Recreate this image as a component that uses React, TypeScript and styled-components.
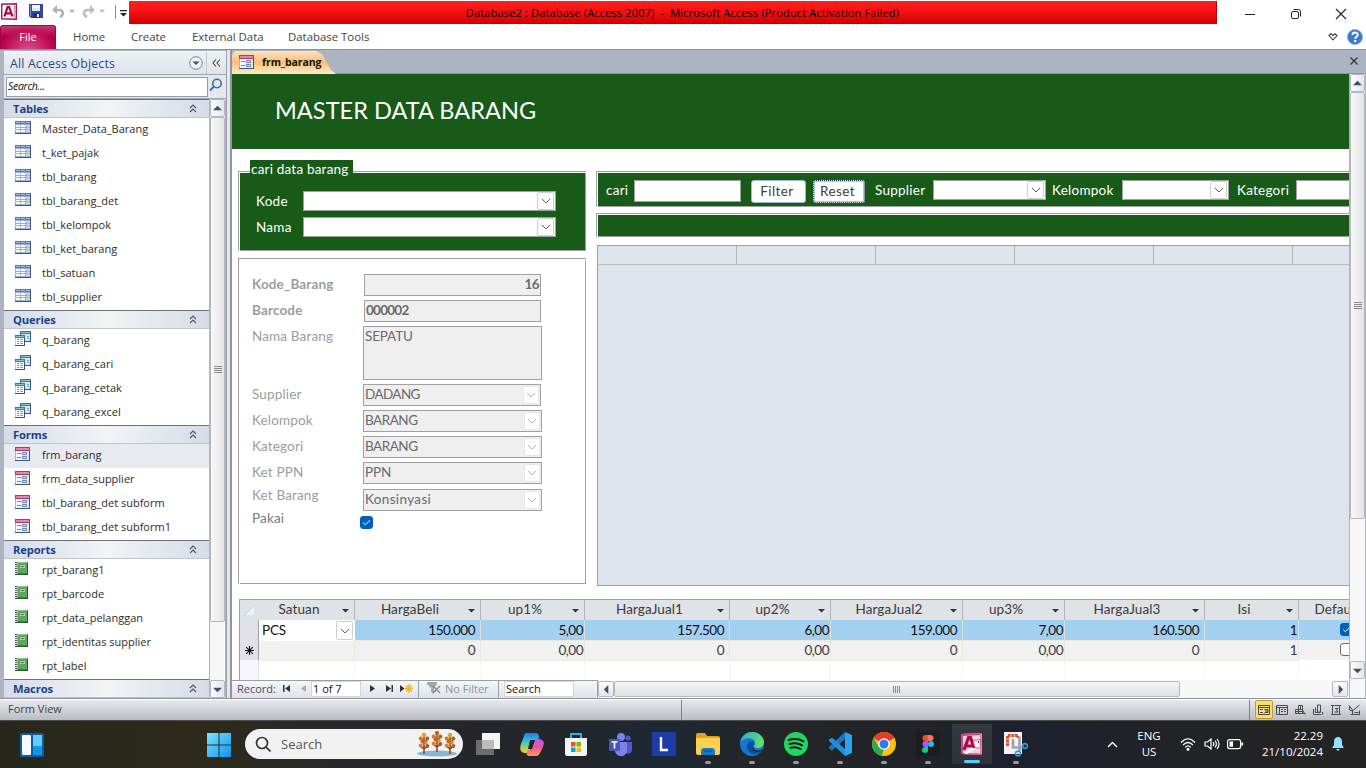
import React from "react";
import styled, { createGlobalStyle, css } from "styled-components";

const UI = `"Open Sans", "Noto Sans", sans-serif`;
const FORM = `Lato, "Open Sans", sans-serif`;
const GREEN = "#185a18";
const LINE = "#a0a0a0";

const Global = createGlobalStyle`
  * { box-sizing: border-box; }
  body { margin: 0; background: #fff; overflow: hidden; }
  svg { display: block; flex: none; }
`;

const Desktop = styled.div`
  width: 1366px;
  height: 768px;
  display: flex;
  flex-direction: column;
  overflow: hidden;
  font-family: ${UI};
  font-size: 11px;
  color: #222;
  white-space: nowrap;
`;

/* ---------- title bar and ribbon ---------- */

const TitleBar = styled.header`
  height: 25px;
  display: flex;
  background: #fff;
`;
const QuickAccess = styled.div`
  width: 129px;
  height: 24px;
  display: flex;
  align-items: center;
`;
const Caption = styled.div`
  width: 1088px;
  height: 23px;
  margin-top: 1px;
  background: linear-gradient(#ff2020, #f81414 40%, #d60000);
  border-right: 1px solid #b80000;
  border-bottom: 1px solid #c80000;
  color: #000;
  font-size: 11px;
  line-height: 23px;
  text-align: center;
  padding-left: 20px;
  letter-spacing: 0.16px;
`;
const WindowButtons = styled.div`
  flex: 1;
  display: flex;
  align-items: center;
  padding: 3px 0 0 27px;
  gap: 33.5px;
`;
const Ribbon = styled.nav`
  height: 25px;
  display: flex;
  background: #fff;
  border-bottom: 1px solid #8b9097;
`;
const FileTab = styled.div`
  width: 56px;
  height: 24px;
  border-radius: 3px 3px 0 0;
  border: 1px solid #a3043f;
  border-bottom: 0;
  background: radial-gradient(ellipse at 50% 115%, #e2528f 0, #c2115a 55%, transparent 75%),
    linear-gradient(#c63a73, #b10048 45%, #b8004f);
  color: #fff;
  line-height: 22px;
  text-align: center;
`;
const RibbonTab = styled.div<{ $w: number }>`
  width: ${(p) => p.$w}px;
  padding-left: 17px;
  line-height: 23px;
  font-size: 11.4px;
  color: #444;
`;
const RibbonTools = styled.div`
  margin-left: auto;
  display: flex;
  align-items: center;
  gap: 9px;
  padding-right: 3px;
`;

/* ---------- work area ---------- */

const Work = styled.div`
  height: 648px;
  display: flex;
  background: #acb4c1;
`;
const NavPane = styled.aside`
  width: 222px;
  margin: 1px 0 0 4px;
  height: 646px;
  background: #fff;
  display: flex;
  flex-direction: column;
`;
const NavHeader = styled.div`
  height: 24px;
  flex: none;
  display: flex;
  align-items: center;
  background: linear-gradient(#eef1f5, #dfe3ea);
  border-bottom: 1px solid #a0a8b4;
  color: #1e4a91;
  font-size: 12.3px;
  padding: 1px 0 0 6px;
`;
const NavTitle = styled.div`
  flex: 1;
  letter-spacing: 0.18px;
`;
const NavCollapse = styled.div`
  width: 20px;
  height: 22px;
  margin-left: 3px;
  border-left: 1px solid #c3c9d2;
  display: flex;
  align-items: center;
  justify-content: center;
`;
const SearchRow = styled.div`
  height: 24px;
  flex: none;
  background: #e4e8ee;
  border-bottom: 1px solid #a0a8b4;
  padding: 2px 2px 1px;
  display: flex;
  gap: 1px;
`;
const SearchBox = styled.div`
  width: 202px;
  height: 20px;
  border: 1px solid #9b9ba3;
  background: #fff;
  padding-left: 1px;
  font-style: italic;
  font-size: 10.5px;
  line-height: 17px;
  color: #111;
  letter-spacing: -0.3px;
`;
const NavScrollArea = styled.div`
  flex: 1;
  display: flex;
`;
const NavList = styled.div`
  width: 205px;
`;
const GroupHead = styled.div`
  height: 19px;
  display: flex;
  align-items: center;
  justify-content: space-between;
  border-top: 1px solid #6d7078;
  border-bottom: 1px solid #c0c4ca;
  background: linear-gradient(90deg, #d5dbe8, #f2f4f5 50%, #d5dbe8);
  color: #1a428a;
  font-weight: 700;
  font-size: 11.2px;
  letter-spacing: -0.1px;
  padding: 0 12px 0 9px;
  line-height: 17px;
`;
const NavItem = styled.div<{ $active?: boolean }>`
  height: 24px;
  display: flex;
  align-items: center;
  padding: 0 0 4px 11px;
  background: ${(p) => (p.$active ? "#e7eaef" : "#fff")};
  color: #2c2c2c;
  font-size: 11px;
`;
const ItemIcon = styled.span`
  width: 27px;
  padding-bottom: 1px;
`;
const Gutter = styled.div`
  width: 6px;
  border-left: 1px solid #9aa2ae;
  background: linear-gradient(90deg, #e4e8ee 0 3px, #8f959e 3px);
`;

/* ---------- scroll bars ---------- */

const VBar = styled.div`
  width: 17px;
  display: flex;
  flex-direction: column;
  background: #f7f7f7;
  border-left: 1px solid #b0b4ba;
  border-right: 1px solid #b0b4ba;
`;
const barPiece = css`
  border: 1px solid #b4b7bc;
  border-radius: 2px;
  display: flex;
  align-items: center;
  justify-content: center;
`;
const VButton = styled.div`
  height: 18px;
  flex: none;
  ${barPiece};
  background: linear-gradient(90deg, #fdfdfe, #e3e5ea);
`;
const VThumb = styled.div<{ $h: number }>`
  height: ${(p) => p.$h}px;
  ${barPiece};
  background: linear-gradient(90deg, #f8f8f8, #e4e4e4);
`;
const BarCorner = styled.div`
  height: 19px;
`;
const Spacer = styled.div`
  flex: 1;
`;
const HBar = styled.div`
  flex: 1;
  display: flex;
  padding: 1px 1px 1px 0;
  background: #f7f7f7;
`;
const HButton = styled.div`
  width: 16px;
  ${barPiece};
  background: linear-gradient(#fdfdfe, #e3e5ea);
`;
const HThumb = styled.div`
  width: 566px;
  ${barPiece};
  background: linear-gradient(#f5f5f5, #dfe0e1);
`;

/* ---------- document ---------- */

const Doc = styled.main`
  width: 1134px;
  display: flex;
  flex-direction: column;
`;
const TabStrip = styled.div`
  height: 24px;
  padding-top: 1px;
  display: flex;
  align-items: flex-start;
  border-bottom: 1px solid #9096a0;
  background: #acb4c1;
`;
const DocTab = styled.div`
  width: 104px;
  height: 23px;
  display: flex;
  align-items: center;
  padding: 0 0 1px 7px;
  gap: 8px;
  background: linear-gradient(#fde3bf, #fac075 48%, #fbd5a2 75%, #fdeccb);
  clip-path: polygon(0 4px, 3px 0, 84px 0, 90px 3px, 99px 19px, 104px 23px, 0 23px);
  color: #111;
  font-size: 10.5px;
  font-weight: 700;
  letter-spacing: -0.1px;
`;
const CloseTab = styled.div`
  margin: 6px 8px 0 auto;
`;
const DocBody = styled.div`
  flex: 1;
  display: flex;
`;
const FormWrap = styled.div`
  width: 1117px;
  display: flex;
  flex-direction: column;
`;
const FormView = styled.section`
  height: 606px;
  overflow: hidden;
  background: #fff;
  font-family: ${FORM};
  font-size: 13.5px;
`;
const FormHeader = styled.h1`
  margin: 0;
  height: 75px;
  padding-left: 43px;
  background: ${GREEN};
  color: #fff;
  font-weight: 400;
  font-size: 23.5px;
  letter-spacing: 0.05px;
  line-height: 73px;
`;
const Columns = styled.div`
  display: flex;
  height: 450px;
  padding: 22px 0 0 6px;
`;
const LeftCol = styled.div`
  width: 348px;
  margin-right: 10px;
`;
const RightCol = styled.div`
  flex: 1;
  overflow: hidden;
`;
const Etched = styled.div<{ $h: number; $gap?: number }>`
  height: ${(p) => p.$h}px;
  margin-bottom: ${(p) => p.$gap ?? 0}px;
  border-left: 1px solid ${LINE};
  border-top: 1px solid ${LINE};
  padding: 1px 0 0 1px;
`;
const Fill = styled.div<{ $green?: boolean; $open?: boolean }>`
  height: 100%;
  border-bottom: 1px solid ${LINE};
  border-right: ${(p) => (p.$open ? 0 : 1)}px solid ${LINE};
  background: ${(p) => (p.$green ? GREEN : "#fff")};
  position: relative;
`;
const Legend = styled.div`
  position: absolute;
  left: 10px;
  top: -13px;
  width: 103px;
  height: 19px;
  padding-left: 1px;
  background: ${GREEN};
  color: #fff;
  line-height: 19px;
  letter-spacing: 0.2px;
`;
const SearchFields = styled.div`
  padding: 18px 0 0 16px;
  display: flex;
  flex-direction: column;
  gap: 6px;
`;
const SearchField = styled.label`
  display: flex;
  height: 20px;
  line-height: 20px;
  color: #fff;
`;
const FieldName = styled.span`
  width: 47px;
  letter-spacing: 0.25px;
`;
const Combo = styled.div<{ $w: number; $dim?: boolean; $h?: number }>`
  width: ${(p) => p.$w}px;
  flex: none;
  height: ${(p) => p.$h ?? 20}px;
  display: flex;
  justify-content: space-between;
  border: 1px solid ${LINE};
  background: ${(p) => (p.$dim ? "#efefef" : "#fff")};
  color: #6a6a6a;
  padding-left: 1px;
  line-height: 19px;
`;
const ComboText = styled.span<{ $ls: number }>`
  letter-spacing: ${(p) => p.$ls}px;
`;
const ComboButton = styled.span<{ $dim?: boolean }>`
  width: ${(p) => (p.$dim ? 16 : 17)}px;
  margin: ${(p) => (p.$dim ? "1px" : "0 1px 0 0")};
  border: 1px solid ${(p) => (p.$dim ? "#e8e8e8" : "#cfcfcf")};
  border-radius: 2px;
  background: #fdfdfd;
  display: flex;
  align-items: center;
  justify-content: center;
  color: ${(p) => (p.$dim ? "#b5b5b5" : "#606060")};
`;
const FilterBar = styled.div`
  display: flex;
  align-items: flex-start;
  padding: 7px 0 0 8px;
  color: #fff;
`;
const BarLabel = styled.span<{ $w: number }>`
  width: ${(p) => p.$w}px;
  flex: none;
  line-height: 21px;
  letter-spacing: 0.25px;
`;
const TextBox = styled.div`
  width: 107px;
  height: 22px;
  flex: none;
  border: 1px solid ${LINE};
  background: #fff;
`;
const Button = styled.button<{ $focus?: boolean; $w: number }>`
  width: ${(p) => p.$w}px;
  height: 23px;
  padding: 0 3px 1px 0;
  flex: none;
  font: inherit;
  letter-spacing: 0.4px;
  color: #404040;
  background: #fff;
  border-radius: 3px;
  border: ${(p) => (p.$focus ? "1px dotted #16305e" : "1px solid #9dbadb")};
  box-shadow: ${(p) => (p.$focus ? "inset 0 0 0 1px #a8c4ea" : "none")};
`;
const Sheet = styled.div`
  margin-left: 1px;
  height: 341px;
  border: 1px solid ${LINE};
  border-right: 0;
  background: #dde4ec;
`;
const SheetHead = styled.div`
  display: grid;
  grid-template-columns: repeat(6, 139px);
  height: 19px;
  border-bottom: 1px solid #b9bcc0;
`;
const SheetCell = styled.div`
  border-right: 1px solid #b0b5bb;
`;

const Details = styled.div`
  padding: 14px 0 0 12px;
`;
const DetailRow = styled.div<{ $h: number; $mt?: number; $bold?: boolean; $dark?: boolean }>`
  height: ${(p) => p.$h}px;
  margin-top: ${(p) => p.$mt ?? 4}px;
  display: flex;
  font-weight: ${(p) => (p.$bold ? 700 : 400)};
  color: ${(p) => (p.$dark ? "#7a7a7a" : "#9c9c9c")};
`;
const DetailLabel = styled.div<{ $lh?: number; $w?: number }>`
  width: ${(p) => p.$w ?? 111}px;
  flex: none;
  line-height: ${(p) => p.$lh ?? 21}px;
  letter-spacing: 0.15px;
`;
const Value = styled.div<{ $right?: boolean; $wide?: boolean; $ls?: number }>`
  width: ${(p) => (p.$wide ? 179 : 177)}px;
  border: 1px solid ${LINE};
  background: #efefef;
  color: #6a6a6a;
  line-height: 19px;
  padding: 0 1px;
  text-align: ${(p) => (p.$right ? "right" : "left")};
  letter-spacing: ${(p) => p.$ls ?? 0}px;
`;
const Check = styled.span<{ $on?: boolean; $mt?: number }>`
  width: 13px;
  height: 13px;
  margin-top: ${(p) => p.$mt ?? 0}px;
  flex: none;
  border-radius: 3px;
  display: flex;
  align-items: center;
  justify-content: center;
  background: ${(p) => (p.$on ? "#005fb8" : "#fff")};
  border: 1px solid ${(p) => (p.$on ? "#005fb8" : "#6a6a6a")};
`;

/* ---------- price datasheet ---------- */

const Prices = styled.div`
  margin-left: 7px;
  border-top: 1px solid ${LINE};
  border-left: 1px solid ${LINE};
  height: 81px;
`;
const PriceRow = styled.div<{ $kind: "head" | "cur" | "new" | "empty" }>`
  display: grid;
  grid-template-columns: 19px 96px 126px 104px 145px 101px 132px 102px 140px 94px 92px;
  height: 20px;
  line-height: ${(p) => (p.$kind === "head" ? 19 : 20)}px;
  background: ${(p) => ({ head: "#dfe2e7", cur: "#a3cff0", new: "#f1f1f1", empty: "#fff" })[p.$kind]};
  color: ${(p) => (p.$kind === "cur" ? "#111" : "#3a3a3a")};
`;
const Selector = styled.div<{ $empty?: boolean }>`
  background: ${(p) => (p.$empty ? "#f6f7fd" : "#dfe2e7")};
  border-right: 1px solid ${(p) => (p.$empty ? "#dddfe6" : "#9ca0a6")};
  border-bottom: 1px solid ${(p) => (p.$empty ? "transparent" : "#9ca0a6")};
  display: flex;
  align-items: center;
  justify-content: center;
`;
const Corner = styled.div`
  padding: 5px 0 0 4px;
`;
const HeadCell = styled.div`
  display: flex;
  justify-content: space-between;
  border-right: 1px solid #b2b5b9;
  padding-right: 5px;
  text-align: center;
  svg { margin-top: 7px; }
`;
const HeadText = styled.span`
  flex: 1;
  padding-right: 3px;
  letter-spacing: 0.1px;
`;
const NumCell = styled.div<{ $pad: number; $soft?: boolean; $faint?: boolean }>`
  border-right: 1px solid ${(p) => (p.$faint ? "#f5f5f0" : p.$soft ? "#e9e9dc" : "#d6dfd9")};
  border-bottom: 1px solid ${(p) => (p.$faint ? "transparent" : "#e9e9dc")};
  padding-right: ${(p) => p.$pad}px;
  text-align: right;
  letter-spacing: -0.5px;
`;
const UnitCell = styled.div`
  display: flex;
  justify-content: space-between;
  background: #fff;
  padding: 1px 1px 1px 3px;
  line-height: 19px;
  letter-spacing: -0.2px;
`;
const CheckCell = styled.div`
  padding: 3px 0 0 41px;
`;

/* ---------- record navigator ---------- */

const Bottom = styled.div`
  height: 18px;
  display: flex;
`;
const RecordBar = styled.div`
  width: 366px;
  border-top: 1px solid #9aa0aa;
  border-right: 1px solid #9aa0aa;
  background: linear-gradient(#f4f6f8, #dfe3e9);
  display: flex;
  align-items: flex-start;
  color: #444f60;
  font-size: 11px;
`;
const RecordPart = styled.div<{ $w: number; $sep?: boolean; $pl?: number; $gray?: boolean }>`
  width: ${(p) => p.$w}px;
  height: 17px;
  line-height: 15px;
  padding: 0 0 2px ${(p) => p.$pl ?? 0}px;
  flex: none;
  display: flex;
  align-items: center;
  gap: 4px;
  border-right: ${(p) => (p.$sep ? "1px solid #9aa0aa" : "0")};
  color: ${(p) => (p.$gray ? "#8e929a" : "inherit")};
`;
const RecordBox = styled.div<{ $w: number }>`
  width: ${(p) => p.$w}px;
  height: 16px;
  flex: none;
  background: #fff;
  border: 1px solid #d3d6db;
  color: #111;
  padding-left: 1px;
  line-height: 14px;
`;

/* ---------- status bar ---------- */

const Status = styled.footer`
  height: 22px;
  display: flex;
  align-items: center;
  border-top: 1px solid #8d939d;
  box-shadow: inset 0 1px #fff;
  background: linear-gradient(#e9ebee, #b9bdc3);
  color: #444;
`;
const StatusPart = styled.div<{ $w: number }>`
  width: ${(p) => p.$w}px;
  height: 20px;
  line-height: 17px;
  padding-left: 8px;
  border-right: 1px solid #7d828a;
`;
const ViewSlot = styled.div<{ $on?: boolean }>`
  width: 18px;
  height: 19px;
  display: flex;
  align-items: center;
  justify-content: center;
  border-radius: 2px;
  color: #4b4b4b;
  ${(p) => p.$on && css`background: #fddc73; border: 1px solid #c29a35;`}
`;
const Views = styled.div`
  display: flex;
  padding-left: 5px;
`;

/* ---------- taskbar ---------- */

const Taskbar = styled.div`
  height: 48px;
  display: flex;
  align-items: center;
  border-top: 1px solid #4c4c4c;
  background: linear-gradient(90deg, #27271d 0, #2d2a1b 15%, #27282a 24%, #22252a 42%, #1d2835 48%, #242527 56%, #212329 68%, #1d212f 75%, #222326 85%, #242424 100%);
  color: #fff;
`;
const Slot = styled.div<{ $w?: number; $active?: boolean }>`
  width: ${(p) => p.$w ?? 44}px;
  height: 47px;
  flex: none;
  display: flex;
  flex-direction: column;
  align-items: center;
  padding-top: 11px;
  ${(p) => p.$active && css`
    background: linear-gradient(#343840, #2e323b) center 3px / 40px 40px no-repeat;
  `}
`;
const Dot = styled.span<{ $active?: boolean }>`
  width: ${(p) => (p.$active ? 16 : 6)}px;
  height: 3px;
  margin-top: 4px;
  border-radius: 2px;
  background: ${(p) => (p.$active ? "#5ccbff" : "#9a9a9a")};
`;
const SearchPill = styled.div`
  width: 218px;
  height: 30px;
  margin: 0 3px 1px 4px;
  border-radius: 15px;
  background: #f2f2f2;
  display: flex;
  align-items: center;
  padding: 0 4px 0 10px;
  color: #555;
  font-size: 13px;
  gap: 10px;
  flex: none;
`;
const Grow = styled.span`
  flex: 1;
`;
const Tray = styled.div`
  margin-left: auto;
  padding: 0 19px 1px 0;
  display: flex;
  align-items: center;
`;
const TrayText = styled.div<{ $w: number; $right?: boolean }>`
  width: ${(p) => p.$w}px;
  font-size: 11.5px;
  line-height: 16px;
  text-align: ${(p) => (p.$right ? "right" : "center")};
`;

/* ---------- icons ---------- */

const Chevron = () => (
  <svg width="10" height="6" viewBox="0 0 10 6" fill="none" stroke="currentColor" strokeWidth="1">
    <path d="M1 1l4 4 4-4" />
  </svg>
);
const Tick = () => (
  <svg width="9" height="7" viewBox="0 0 9 7" fill="none" stroke="#fff" strokeWidth="1">
    <path d="M1.200 3.600l2.200 2.100L8 1.200" />
  </svg>
);
const Tri = ({ dir, color = "#3e4d78", size = 9 }: { dir: "up" | "down" | "left" | "right"; color?: string; size?: number }) => {
  const d = { up: "M0 7l5-5 5 5z", down: "M0 3l5 5 5-5z", left: "M7 0L2 5l5 5z", right: "M3 0l5 5-5 5z" }[dir];
  return <svg width={size} height={size} viewBox="0 0 10 10"><path d={d} fill={color} /></svg>;
};
const DoubleUp = () => (
  <svg width="8" height="9" viewBox="0 0 8 9" fill="none" stroke="#555" strokeWidth="1.100">
    <path d="M1 4l3-3 3 3M1 8l3-3 3 3" />
  </svg>
);
const TableIcon = () => (
  <svg width="16" height="13" viewBox="0 0 16 13">
    <path fill="#3f5680" d="M0 0h16v13H0z" />
    <path fill="#9db0d4" d="M0 0h15v12H0z" />
    <path fill="#5a78b4" d="M0 0h15v3H0z" />
    <path fill="#fff" d="M1 4h4v2H1zM6 4h4v2H6zM1 7h4v1H1zM6 7h4v1H6zM1 9h4v2H1zM6 9h4v2H6z" />
    <path fill="#c9d8f2" d="M11 4h4v2h-4zM11 7h4v1h-4zM11 9h4v2h-4z" />
    <path fill="#a9bce0" d="M1 1h4v1H1zM6 1h4v1H6zM11 1h4v1h-4z" />
  </svg>
);
const QueryIcon = () => (
  <svg width="16" height="15" viewBox="0 0 16 15">
    <path fill="#31547b" d="M5 0h11v11H5z" /><path fill="#d6e4f5" d="M6 3h9v7H6z" /><path fill="#35817f" d="M5 0h11v3H5z" /><path fill="#8cc5c0" d="M6 1h9v1H6z" />
    <path fill="#7f9cc5" d="M12 5h2v1h-2zM12 7h2v1h-2z" />
    <path fill="#31547b" d="M0 4h10v11H0z" /><path fill="#fff" d="M0 7h9v7H0z" /><path fill="#b8cbe8" d="M0 7h1v7H0z" /><path fill="#35817f" d="M0 4h10v3H0z" /><path fill="#8cc5c0" d="M1 5h8v1H1z" />
    <path fill="#7f9cc5" d="M2 8h2v1H2zM5 8h3v1H5zM2 10h2v1H2zM5 10h3v1H5zM2 12h2v1H2zM5 12h3v1H5z" />
  </svg>
);
const FormIcon = () => (
  <svg width="15" height="14" viewBox="0 0 15 14">
    <path fill="#3f567c" d="M0 0h15v14H0z" /><path fill="#dbe6f8" d="M0 4h14v9H0z" /><path fill="#a93a66" d="M0 0h15v4H0z" /><path fill="#e08aab" d="M1 1h13v2H1z" />
    <path fill="#f8fbff" d="M1 4h5v9H1z" /><path fill="#9db3d6" d="M0 4h1v9H0z" />
    <path fill="#6d85b0" d="M2 6h4v1H2zM2 10h4v1H2z" />
    <path fill="none" stroke="#6d85b0" d="M7.500 5.500h4v2h-4zM7.500 9.500h4v2h-4z" />
  </svg>
);
const ReportIcon = () => (
  <svg width="13" height="13" viewBox="0 0 13 13">
    <path fill="#2b5c2f" d="M2 0h11v13H2z" /><path fill="#5fa562" d="M2 0h10v12H2z" /><path fill="#8fc98c" d="M2 0h10v1H2zM2 1h1v10H2z" />
    <path fill="#a3cf9f" d="M5 3h5v3H5z" /><path fill="#4c8c4e" d="M6 4h3v1H6z" /><path fill="#3f7f43" d="M3 11h9v1H3z" />
    <path stroke="#444" strokeWidth="2" strokeDasharray="1 1" d="M1 0v13" />
  </svg>
);
const AccessLogo = () => (
  <svg width="16" height="17" viewBox="0 0 16 17">
    <path fill="#fff" stroke="#a91550" strokeWidth="1.400" d="M.7 1.200L15.300.7v15.600L.7 15.800z" />
    <path fill="none" stroke="#a5083f" strokeWidth="2.200" d="M3.400 13.500L6.600 4h1.600l3.200 9.500M4.800 10.400h5.400" />
    <path fill="#d9a0b8" d="M12.500 2h1.500v13h-1.500z" />
  </svg>
);
const AccessTask = () => (
  <svg width="24" height="24" viewBox="0 0 24 24">
    <path fill="#f7d3e2" d="M1 2l21-1v22L1 22z" /><path fill="#d8447f" d="M1 2l21-1v2L3 4v17l19 .5V23L1 22z" /><path fill="#e783ab" d="M20 2h2v20h-2z" />
    <path fill="none" stroke="#ad0a4b" strokeWidth="3.200" d="M4 18L8.500 5.500h2L14 16M6 14h7" />
    <path fill="#fff" stroke="#c43b74" strokeWidth=".8" d="M13 8.500l7.500-1v5.500c0 4-5 4-6 1z" /><path d="M4 21.500l8-6 3 1.500-8 5z" fill="#fff" />
    <circle cx="18.500" cy="10" r="1" fill="#b30d50" />
  </svg>
);
const Save = () => (
  <svg width="15" height="14" viewBox="0 0 15 14">
    <path fill="#3347a8" d="M0 0h14v14H2l-2-2z" /><path fill="#dfe7fa" d="M3 1h8v6H3z" /><path fill="#f8faff" d="M3 1h8v3H3z" /><path fill="#2a3354" d="M4 9h7v5H4z" /><path fill="#e9eefc" d="M8 10h2v3H8z" />
    <path fill="#7b8fe0" d="M1 1h1v11H1z" />
  </svg>
);
const Undo = () => (
  <svg width="13" height="13" viewBox="0 0 13 13" fill="none" stroke="#b3b3b3" strokeWidth="2.600">
    <path d="M2 5h5.500c4.500 0 4 5.500.5 7" /><path fill="#b3b3b3" stroke="none" d="M0 5l5-5v9z" />
  </svg>
);
const Redo = () => (
  <svg width="13" height="13" viewBox="0 0 13 13" fill="none" stroke="#bdbdbd" strokeWidth="2.600">
    <path d="M11 5H5.500C1 5 1 10 5 12" /><path fill="#bdbdbd" stroke="none" d="M13 5L8 0v9z" />
  </svg>
);
const Funnel = () => (
  <svg width="14" height="13" viewBox="0 0 14 13">
    <path fill="#a4a7ad" d="M0 0h10v2L7 6v6L4 10V6L0 2z" /><path stroke="#8b8e94" strokeWidth="1.600" d="M6 4l7 7M13 4l-7 7" />
  </svg>
);
const Help = () => (
  <svg width="16" height="16" viewBox="0 0 16 16">
    <circle cx="8" cy="8" r="7.600" fill="#3f78cc" stroke="#8fb4e8" strokeWidth=".8" />
    <path d="M5.500 6c0-3.300 5.200-3.200 5.200-.2 0 2-2.500 1.800-2.500 4" fill="none" stroke="#fff" strokeWidth="1.900" /><circle cx="8.200" cy="12" r="1.200" fill="#fff" />
  </svg>
);
const Grip = () => (
  <svg width="8" height="8" viewBox="0 0 8 8"><path d="M0 .5h8M0 2.500h8M0 4.500h8M0 6.500h8" stroke="#8a8a8a" /></svg>
);

const VIEW_ICONS = [
  "M.5 1.500h11v9H.5zM.5 3.500h11M2 5.500h3M2 8.500h3M6.500 5.500h3.500v3H6.500M7 7h3",
  "M.5 1.500h11v9H.5zM.5 3.500h11M3.500 3v7M5 5.500h2M8 5.500h2M5 7.500h2M8 7.500h2",
  "M4.500 1.500h4v4h-4zM1.500 5.500h7v4h-7zM4.500 5v5M6.500 1v5M1 7.500h8M8.500 6l2.500 4.500M9 9.500h2.500",
  "M1.500 5v5.500h7.500M3.500 3.500v5h5M5.500 1v7h3v-7zM10.500 8v3",
  "M1 1.500h3M8 1.500h3M2.500 1v9M9.500 1v9M1 10.500h10M4.500 1.500h4M4.500 10.500h4M5 4.500h3l-1.500 1.500 1.500 2H4.500",
  "M1 1.500l4 5L11.500 1M4.500 6.500v4h7v-4M2.500 10.500h9M6.500 8.500h4M1.500 2v4l3 1",
];

const SearchLens = () => (
  <svg width="14" height="15" viewBox="0 0 14 15" fill="none" stroke="#3b6db0" strokeWidth="1.600">
    <circle cx="8" cy="6.500" r="4.200" /><path d="M5 9.500L1 13.500" strokeWidth="2" />
  </svg>
);

const Trees = () => (
  <svg width="44" height="26" viewBox="0 0 44 26">
    <ellipse cx="22" cy="22.500" rx="20" ry="3" fill="#86b6d0" />
    {[9, 22, 35].map((x, i) => (
      <g key={x} transform={`translate(${x} ${i === 1 ? 0 : 2})`}>
        <path d="M0 3v18M0 9L-3.500 5M0 10l3.500-4M0 16l-4-3M0 16l4-3" stroke="#84451c" strokeWidth="1.500" />
        <circle cy="2" r="2.200" fill={i === 1 ? "#c9621c" : "#d9a32a"} />
        <circle cx="-3.300" cy="5.500" r="2" fill="#d9781f" /><circle cx="3.300" cy="5.500" r="2" fill="#b95a1a" />
        <circle cx="-1.500" cy="8.500" r="2" fill="#c4681d" /><circle cx="2" cy="9.500" r="1.800" fill="#dd9127" />
        <circle cx="-3.300" cy="12.500" r="2" fill="#d98424" /><circle cx="3.300" cy="13" r="2" fill="#b5531a" />
      </g>
    ))}
  </svg>
);

const icons: Record<string, React.ReactNode> = {
  widgets: <><rect width="24" height="24" rx="1.500" x="0" y="1" fill="#0b5ca8" /><rect x="2" y="3" width="9" height="20" rx="1" fill="#f6f8fb" /><path fill="#62ccfb" d="M13 3h9v11h-9z" /><path fill="#1793e8" d="M13 14h9v9h-9z" /></>,
  start: <path fill="url(#win)" d="M0 1h11.500v11.500H0zM12.500 1H24v11.500H12.500zM0 13.500h11.500V25H0zM12.500 13.500H24V25H12.500z" />,
  tasks: <><path d="M0 8h18v15H0z" fill="#6d6d6d" /><path d="M6 1h18v16H6z" fill="#f4f4f4" /><path d="M6 8h12v9H6z" fill="#bcbcbc" /></>,
  copilot: <><path d="M6 1h10c2 0 3 2 3 4l-1 3h-4L9 21H6C1 21-1 18 1 12L4 4c.5-2 1-3 2-3z" fill="url(#cpA)" /><path d="M18 7c5 0 7 3 5 8l-3 6c-1 2-2 3-4 3H9c-2 0-3-2-2-4l1-2h3l4-11z" fill="url(#cpB)" /><path d="M10 8h5l-3 9H8z" fill="#22242a" /></>,
  store: <><path d="M7 6V2h10v4" fill="none" stroke="#2fb4ea" strokeWidth="2" /><path d="M1 6h22v16q0 2-2 2H3q-2 0-2-2z" fill="#f4f4f4" /><path fill="#f25022" d="M7 10h4.500v4.500H7z" /><path fill="#7fba00" d="M12.500 10H17v4.500h-4.500z" /><path fill="#00a4ef" d="M7 15.500h4.500V20H7z" /><path fill="#ffb900" d="M12.500 15.500H17V20h-4.500z" /></>,
  teams: <><circle cx="13" cy="5" r="4" fill="#7b83eb" /><circle cx="20" cy="6" r="2.600" fill="#5059c9" /><path d="M16 10h8v8c0 3-4 5-6 3z" fill="#5059c9" /><path d="M7 10h12v8c0 8-11 8-12 1z" fill="#7b83eb" /><path d="M1 7h11v12H1z" fill="#4b53bc" /><path d="M3.500 10h6M6.500 10v6.500" stroke="#fff" strokeWidth="1.600" /></>,
  l: <><path d="M0 0h24v24H0z" fill="#1d3ca8" /><path d="M9 5v13h7" fill="none" stroke="#fff" strokeWidth="2.400" /></>,
  folder: <><path d="M0 3q0-2 2-2h7l2 3h11q2 0 2 2v4H0z" fill="#e3a21a" /><path d="M0 6h24v15q0 2-2 2H2q-2 0-2-2z" fill="#ffd04c" /><path d="M5 23v-4q0-3 3-3h8q3 0 3 3v4z" fill="#1778cc" /><path d="M8 19h8" stroke="#0d5ba5" strokeWidth="1.500" /></>,
  edge: <><circle cx="12" cy="12" r="12" fill="#1b74cf" /><path d="M.3 10C2 3 7 0 12 0c7 0 12 5 12 10 0 4-3 6-6 6-3 0-4-1-4-2 1-1 1.500-2 1-4C14 6 6 4 .3 10z" fill="url(#edge)" /><path d="M9 10c-4 4-2 11 5 12 4 0 6-1 8-3-3 1.500-9 1-9-4 0-2 1-3 1-4-1-2-3-2-5-1z" fill="#0c4f9e" /><path d="M13 15c0 3 5 5 10 2l-1 2c-5 2-12 0-9-4z" fill="#22272c" /></>,
  spotify: <><circle cx="12" cy="12" r="12" fill="#1ed760" /><path d="M4.500 8c5-1.500 11-1 15 1.300M5.500 12c4.500-1.200 9-.8 12.500 1.300M6.500 15.800c3.500-1 7-.6 10.200 1.200" fill="none" stroke="#17181a" strokeWidth="2" strokeLinecap="round" /></>,
  vscode: <><path d="M17 0l7 3v18l-7 3z" fill="#2ba3ee" /><path d="M17 0v7L4 18.500l-3-2V15z" fill="#1478c3" /><path d="M17 24v-7L4 5.500l-3 2V9z" fill="#1e8fdc" /></>,
  chrome: <><circle cx="12" cy="12" r="12" fill="#fbc116" /><path d="M12 12L1.600 6A12 12 0 0 1 22.400 6z" fill="#e33b2e" /><path d="M1.600 6l5.200 9 5.200 2-2.500 6.700A12 12 0 0 1 1.600 6z" fill="#2da94f" /><circle cx="12" cy="12" r="5.800" fill="#fff" /><circle cx="12" cy="12" r="4.500" fill="#2f7be8" /></>,
  figma: <><path d="M0 0h24v24H0z" fill="#1d1d1f" /><path d="M12 3H9.500a3 3 0 0 0 0 6H12z" fill="#f24e1e" /><path d="M12 3h2.500a3 3 0 0 1 0 6H12z" fill="#ff7262" /><path d="M12 9H9.500a3 3 0 0 0 0 6H12z" fill="#a259ff" /><circle cx="15" cy="12" r="3" fill="#1abcfe" /><path d="M12 15H9.500a3 3 0 1 0 2.500 3z" fill="#0acf83" /></>,
  snip: <><path d="M0 0h18v22H0z" fill="#f4f4f4" /><path d="M3.500 14V3.500H14V6" fill="none" stroke="#d8532b" strokeWidth="3" strokeDasharray="2.800 .8" /><path d="M9 7v8.500h9M15.500 5v14" stroke="#9ea3a8" strokeWidth="2.600" fill="none" /><circle cx="21" cy="14" r="2.400" fill="none" stroke="#2a9be0" strokeWidth="1.600" /><circle cx="14" cy="21.500" r="2.400" fill="none" stroke="#2a9be0" strokeWidth="1.600" /></>,
};

const Gradients = () => (
  <svg width="24" height="0" viewBox="0 0 24 0">
    <defs>
      <linearGradient id="win" x1="0" y1="0" x2="1" y2="1"><stop offset="0" stopColor="#7be3ff" /><stop offset="1" stopColor="#0f93ee" /></linearGradient>
      <linearGradient id="cpA" x1="0" y1="0" x2="0" y2="1"><stop offset="0" stopColor="#1c7cf0" /><stop offset=".45" stopColor="#3ec8c8" /><stop offset=".8" stopColor="#b6d64a" /><stop offset="1" stopColor="#f7c231" /></linearGradient>
      <linearGradient id="cpB" x1="0" y1="0" x2="0" y2="1"><stop offset="0" stopColor="#b45cf0" /><stop offset=".5" stopColor="#f0569a" /><stop offset="1" stopColor="#ff9a4a" /></linearGradient>
      <linearGradient id="edge" x1="0" y1="0" x2="1" y2="0.300"><stop offset="0" stopColor="#28a8e8" /><stop offset="1" stopColor="#5ee06c" /></linearGradient>
    </defs>
  </svg>
);

const TaskIcon = ({ name, w, running }: { name: string; w?: number; running?: boolean }) => (
  <Slot $w={w}>
    <svg width="24" height="25" viewBox="0 0 24 25">{icons[name]}</svg>
    {running && <Dot />}
  </Slot>
);

/* ---------- data ---------- */

const groups: { title: string; icon: React.ReactNode; items: string[] }[] = [
  { title: "Tables", icon: <TableIcon />, items: ["Master_Data_Barang", "t_ket_pajak", "tbl_barang", "tbl_barang_det", "tbl_kelompok", "tbl_ket_barang", "tbl_satuan", "tbl_supplier"] },
  { title: "Queries", icon: <QueryIcon />, items: ["q_barang", "q_barang_cari", "q_barang_cetak", "q_barang_excel"] },
  { title: "Forms", icon: <FormIcon />, items: ["frm_barang", "frm_data_supplier", "tbl_barang_det subform", "tbl_barang_det subform1"] },
  { title: "Reports", icon: <ReportIcon />, items: ["rpt_barang1", "rpt_barcode", "rpt_data_pelanggan", "rpt_identitas supplier", "rpt_label"] },
  { title: "Macros", icon: null, items: [] },
];
const heads = ["Satuan", "HargaBeli", "up1%", "HargaJual1", "up2%", "HargaJual2", "up3%", "HargaJual3", "Isi"];
const current = ["150.000", "5,00", "157.500", "6,00", "159.000", "7,00", "160.500", "1"];
const fresh = ["0", "0,00", "0", "0,00", "0", "0,00", "0", "1"];
const padFor = (i: number) => (i === 7 || i % 2 === 1 ? 1 : 5);

const DropBox = ({ w, h, dim, ls = 0, children }: { w: number; h?: number; dim?: boolean; ls?: number; children?: React.ReactNode }) => (
  <Combo $w={w} $h={h} $dim={dim}>
    <ComboText $ls={ls}>{children}</ComboText>
    <ComboButton $dim={dim}><Chevron /></ComboButton>
  </Combo>
);

const Navigation = () => (
  <NavPane>
    <NavHeader>
      <NavTitle>All Access Objects</NavTitle>
      <svg width="14" height="14" viewBox="0 0 14 14"><circle cx="7" cy="7" r="6.300" fill="#eef0f3" stroke="#7f8690" /><path d="M3.500 5.500h7L7 9z" fill="#4a4f58" /></svg>
      <NavCollapse>
        <svg width="9" height="8" viewBox="0 0 9 8" fill="none" stroke="#444" strokeWidth="1.100"><path d="M4 .5L1 4l3 3.500M8 .5L5 4l3 3.500" /></svg>
      </NavCollapse>
    </NavHeader>
    <SearchRow>
      <SearchBox>Search...</SearchBox>
      <SearchLens />
    </SearchRow>
    <NavScrollArea>
      <NavList>
        {groups.map((g) => (
          <React.Fragment key={g.title}>
            <GroupHead>{g.title}<DoubleUp /></GroupHead>
            {g.items.map((it) => (
              <NavItem key={it} $active={it === "frm_barang"}><ItemIcon>{g.icon}</ItemIcon>{it}</NavItem>
            ))}
          </React.Fragment>
        ))}
      </NavList>
      <VBar>
        <VButton><Tri dir="up" /></VButton>
        <VThumb $h={505}><Grip /></VThumb>
        <Spacer />
        <VButton><Tri dir="down" /></VButton>
      </VBar>
    </NavScrollArea>
  </NavPane>
);

const details: [string, string, number][] = [["Supplier", "DADANG", -0.6], ["Kelompok", "BARANG", -0.5], ["Kategori", "BARANG", -0.5], ["Ket PPN", "PPN", -0.1]];

const Form = () => (
  <FormView>
    <FormHeader>MASTER DATA BARANG</FormHeader>
    <Columns>
      <LeftCol>
        <Etched $h={80} $gap={7}>
          <Fill $green>
            <Legend>cari data barang</Legend>
            <SearchFields>
              <SearchField><FieldName>Kode</FieldName><DropBox w={253} /></SearchField>
              <SearchField><FieldName>Nama</FieldName><DropBox w={253} /></SearchField>
            </SearchFields>
          </Fill>
        </Etched>
        <Etched $h={326}>
          <Fill>
            <Details>
              <DetailRow $h={22} $mt={0} $bold><DetailLabel $w={112}>Kode_Barang</DetailLabel><Value $right $ls={-0.6}>16</Value></DetailRow>
              <DetailRow $h={22} $bold><DetailLabel $w={112}>Barcode</DetailLabel><Value $ls={-0.75}>000002</Value></DetailRow>
              <DetailRow $h={54}><DetailLabel>Nama Barang</DetailLabel><Value $wide $ls={-0.15}>SEPATU</Value></DetailRow>
              {details.map(([k, v, ls], i) => (
                <DetailRow key={k} $h={22}><DetailLabel>{k}</DetailLabel><DropBox w={i ? 179 : 178} h={22} dim ls={ls}>{v}</DropBox></DetailRow>
              ))}
              <DetailRow $h={22} $mt={5}><DetailLabel $lh={13}>Ket Barang</DetailLabel><DropBox w={179} h={22} dim ls={0.35}>Konsinyasi</DropBox></DetailRow>
              <DetailRow $h={18} $mt={0} $dark><DetailLabel $w={108} $lh={14}>Pakai</DetailLabel><Check $on $mt={5}><Tick /></Check></DetailRow>
            </Details>
          </Fill>
        </Etched>
      </LeftCol>
      <RightCol>
        <Etched $h={36} $gap={6}>
          <Fill $green $open>
            <FilterBar>
              <BarLabel $w={28}>cari</BarLabel><TextBox />
              <BarLabel $w={10} /><Button $w={55}>Filter</Button>
              <BarLabel $w={7} /><Button $w={52} $focus>Reset</Button>
              <BarLabel $w={10} /><BarLabel $w={58}>Supplier</BarLabel><DropBox w={113} />
              <BarLabel $w={6} /><BarLabel $w={70}>Kelompok</BarLabel><DropBox w={107} />
              <BarLabel $w={8} /><BarLabel $w={59}>Kategori</BarLabel><DropBox w={113} />
            </FilterBar>
          </Fill>
        </Etched>
        <Etched $h={24} $gap={8}><Fill $green $open /></Etched>
        <Sheet><SheetHead>{[0, 1, 2, 3, 4, 5].map((i) => <SheetCell key={i} />)}</SheetHead></Sheet>
      </RightCol>
    </Columns>
    <Prices>
      <PriceRow $kind="head">
        <Corner><svg width="11" height="11" viewBox="0 0 11 11"><path d="M11 0v11H0z" fill="#eef3fa" stroke="#b8c6da" strokeWidth=".6" /></svg></Corner>
        {heads.map((h) => <HeadCell key={h}><HeadText>{h}</HeadText><Tri dir="down" color="#333" size={7} /></HeadCell>)}
        <HeadCell><HeadText>Default</HeadText><Tri dir="down" color="#333" size={7} /></HeadCell>
      </PriceRow>
      <PriceRow $kind="cur">
        <Selector />
        <UnitCell>PCS<ComboButton><Chevron /></ComboButton></UnitCell>
        {current.map((v, i) => <NumCell key={i} $pad={padFor(i)}>{v}</NumCell>)}
        <CheckCell><Check $on><Tick /></Check></CheckCell>
      </PriceRow>
      <PriceRow $kind="new">
        <Selector>
          <svg width="9" height="9" viewBox="0 0 9 9" stroke="#111" strokeWidth="1.100"><path d="M4.500 0v9M0 4.500h9M1.200 1.200l6.600 6.600M7.800 1.200L1.200 7.800" /></svg>
        </Selector>
        <NumCell $pad={0} $soft />
        {fresh.map((v, i) => <NumCell key={i} $pad={padFor(i)} $soft>{v}</NumCell>)}
        <CheckCell><Check /></CheckCell>
      </PriceRow>
      <PriceRow $kind="empty">
        <Selector $empty />
        {heads.map((h) => <NumCell key={h} $pad={0} $faint />)}
      </PriceRow>
    </Prices>
  </FormView>
);

const Records = () => (
  <RecordBar>
    <RecordPart $w={51} $pl={5}>Record:</RecordPart>
    <RecordPart $w={18}><svg width="7" height="7" viewBox="0 0 7 7"><path d="M0 0h1.500v7H0zM7 0v7L2 3.500z" fill="#333" /></svg></RecordPart>
    <RecordPart $w={10}><svg width="5" height="7" viewBox="0 0 5 7"><path d="M5 0v7L0 3.500z" fill="#aaa" /></svg></RecordPart>
    <RecordBox $w={50}>1 of 7</RecordBox>
    <RecordPart $w={25} $pl={9}><svg width="5" height="7" viewBox="0 0 5 7"><path d="M0 0v7l5-3.500z" fill="#333" /></svg></RecordPart>
    <RecordPart $w={14}><svg width="7" height="7" viewBox="0 0 7 7"><path d="M5.500 0H7v7H5.500zM0 0v7l5-3.500z" fill="#333" /></svg></RecordPart>
    <RecordPart $w={19} $sep><svg width="13" height="9" viewBox="0 0 13 9"><path d="M0 1v7l4.500-3.500z" fill="#333" /><path d="M9 0v9M5 4.500h8M6 1.500l6 6M12 1.500l-6 6" stroke="#e8bd2c" strokeWidth="1.400" /></svg></RecordPart>
    <RecordPart $w={80} $pl={8} $sep $gray><Funnel />No Filter</RecordPart>
    <RecordPart $w={5} />
    <RecordBox $w={70}>Search</RecordBox>
  </RecordBar>
);

export default function App() {
  return (
    <>
      <Global />
      <Desktop>
        <TitleBar>
          <QuickAccess>
            <RecordPart $w={21} $pl={1}><AccessLogo /></RecordPart>
            <RecordPart $w={30} $pl={8}><Save /></RecordPart>
            <RecordPart $w={31} $pl={1}><Undo /><Tri dir="down" color="#aaa" size={6} /></RecordPart>
            <RecordPart $w={33}><Redo /><Tri dir="down" color="#bbb" size={6} /></RecordPart>
            <svg width="12" height="14" viewBox="0 0 12 14"><path d="M.5 0v14" stroke="#888" /><path d="M5 5h7v1.200H5zM5 8h7l-3.500 3.500z" fill="#222" /></svg>
          </QuickAccess>
          <Caption>Database2 : Database (Access 2007)&nbsp; -&nbsp; Microsoft Access (Product Activation Failed)</Caption>
          <WindowButtons>
            <svg width="12" height="12" viewBox="0 0 12 12"><path d="M1 6.500h10" stroke="#222" /></svg>
            <svg width="12" height="12" viewBox="0 0 12 12" fill="none" stroke="#222"><rect x="1.500" y="3.500" width="7" height="7" rx="1.500" /><path d="M3.500 1.500H8.500q2 0 2 2v5" /></svg>
            <svg width="12" height="12" viewBox="0 0 12 12" stroke="#222" strokeWidth="1.100"><path d="M1 1l10 10M11 1L1 11" /></svg>
          </WindowButtons>
        </TitleBar>
        <Ribbon>
          <FileTab>File</FileTab>
          <RibbonTab $w={58}>Home</RibbonTab>
          <RibbonTab $w={61}>Create</RibbonTab>
          <RibbonTab $w={96}>External Data</RibbonTab>
          <RibbonTab $w={110}>Database Tools</RibbonTab>
          <RibbonTools>
            <svg width="10" height="8" viewBox="0 0 10 8" fill="none" stroke="#444" strokeWidth="1.100"><path d="M1 2.500L3 .8 5 2.500 7 .8 9 2.500 5 7z" /></svg>
            <Help />
          </RibbonTools>
        </Ribbon>
        <Work>
          <Navigation />
          <Gutter />
          <Doc>
            <TabStrip>
              <DocTab><FormIcon />frm_barang</DocTab>
              <CloseTab><svg width="8" height="8" viewBox="0 0 8 8" stroke="#333" strokeWidth="1.300"><path d="M.5.500l7 7M7.500.500l-7 7" /></svg></CloseTab>
            </TabStrip>
            <DocBody>
              <FormWrap>
                <Form />
                <Bottom>
                  <Records />
                  <HBar>
                    <HButton><Tri dir="left" /></HButton>
                    <HThumb><svg width="8" height="7" viewBox="0 0 8 7"><path d="M.5 0v7M2.500 0v7M4.500 0v7M6.500 0v7" stroke="#8a8a8a" /></svg></HThumb>
                    <Spacer />
                    <HButton><Tri dir="right" /></HButton>
                  </HBar>
                </Bottom>
              </FormWrap>
              <VBar>
                <VButton><Tri dir="up" /></VButton>
                <VThumb $h={427}><Grip /></VThumb>
                <Spacer />
                <VButton><Tri dir="down" /></VButton>
                <BarCorner />
              </VBar>
            </DocBody>
          </Doc>
        </Work>
        <Status>
          <StatusPart $w={682}>Form View</StatusPart>
          <StatusPart $w={568} />
          <Views>
            {VIEW_ICONS.map((d, i) => (
              <ViewSlot key={i} $on={i === 0}><svg width="12" height="12" viewBox="0 0 12 12" fill="none" stroke="currentColor"><path d={d} /></svg></ViewSlot>
            ))}
          </Views>
        </Status>
        <Taskbar>
          <TaskIcon name="widgets" w={64} />
          <Slot $w={133} />
          <TaskIcon name="start" />
          <SearchPill>
            <svg width="16" height="16" viewBox="0 0 16 16" fill="none" stroke="#333" strokeWidth="1.700"><circle cx="7" cy="7" r="5.500" /><path d="M11 11l4.500 4.500" /></svg>
            Search<Grow /><Trees />
          </SearchPill>
          <TaskIcon name="tasks" />
          <TaskIcon name="copilot" />
          <TaskIcon name="store" />
          <TaskIcon name="teams" />
          <TaskIcon name="l" />
          <TaskIcon name="folder" running />
          <TaskIcon name="edge" running />
          <TaskIcon name="spotify" running />
          <TaskIcon name="vscode" running />
          <TaskIcon name="chrome" running />
          <TaskIcon name="figma" running />
          <Slot $active><AccessTask /><Dot $active /></Slot>
          <TaskIcon name="snip" running />
          <Tray>
            <svg width="11" height="7" viewBox="0 0 11 7" fill="none" stroke="#fff" strokeWidth="1.400"><path d="M1 6l4.500-4.500L10 6" /></svg>
            <TrayText $w={62}>ENG<br />US</TrayText>
            <svg width="16" height="14" viewBox="0 0 16 14" fill="none" stroke="#fff" strokeWidth="1.200"><path d="M1 5.500q7-7.500 14 0M3 8q5-5 10 0M5.200 10.300q2.800-2.800 5.600 0" /><circle cx="8" cy="12.300" r=".9" fill="#fff" /></svg>
            <svg width="25" height="14" viewBox="0 0 25 14" fill="none" stroke="#fff" strokeWidth="1.200"><path d="M9 5h2.500L15 2v10l-3.500-3H9zM17 5q1.500 2 0 4M19 3.500q2.800 3.500 0 7M21 2q4 5 0 10" /></svg>
            <svg width="24" height="14" viewBox="0 0 24 14" fill="none" stroke="#fff" strokeWidth="1.200"><rect x="6.600" y="2.600" width="13" height="9" rx="2" /><path d="M21.200 5.500v3" strokeWidth="1.800" /><rect x="8.500" y="4.500" width="3.500" height="5.200" fill="#fff" stroke="none" /></svg>
            <TrayText $w={78} $right>22.29<br />21/10/2024</TrayText>
            <svg width="24" height="16" viewBox="0 0 24 16"><path d="M10 12q-1 0-.5-1L11 9V5.500Q11.300 1 15 1t4 4.500V9l1.500 2q.5 1-.5 1z" fill="#8fe4ff" /><path d="M13.200 13h3.600q-.4 1.800-1.800 1.800T13.200 13z" fill="#8fe4ff" /></svg>
          </Tray>
        </Taskbar>
        <Gradients />
      </Desktop>
    </>
  );
}
